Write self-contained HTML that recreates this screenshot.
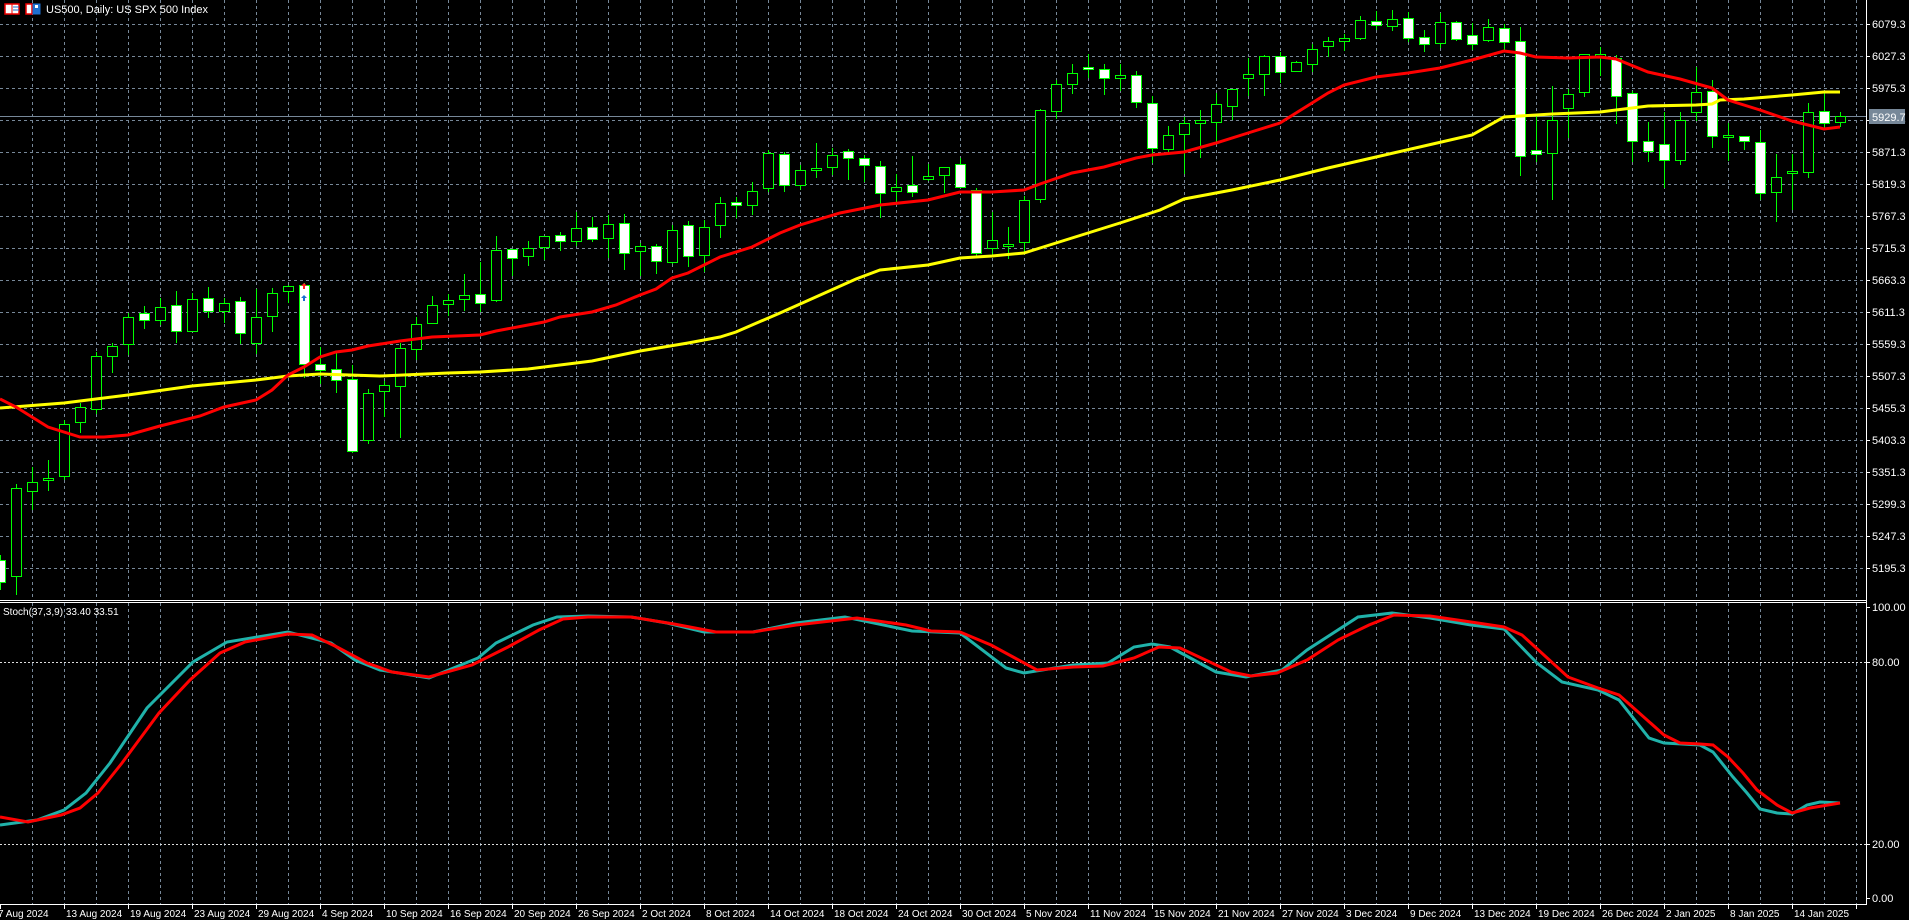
<!DOCTYPE html>
<html><head><meta charset="utf-8">
<style>
html,body{margin:0;padding:0;background:#000;width:1909px;height:920px;overflow:hidden}
svg{display:block}
text{font-family:"Liberation Sans",sans-serif;font-size:11px;fill:#fff}
#dates text{font-size:10px}
</style></head>
<body>
<svg id="c" width="1909" height="920" viewBox="0 0 1909 920" xmlns="http://www.w3.org/2000/svg">
<rect width="1909" height="920" fill="#000"/>
<g id="grid"></g>
<line x1="0" y1="116.5" x2="1866" y2="116.5" stroke="#778899" stroke-width="1"/>
<g id="candles"></g>
<polyline fill="none" stroke="#ffff00" stroke-width="3" points="0,408 64,403 128,395 192,386 256,380 288,376 320,374 380,376 448,373 480,372 528,369 560,365 592,361 640,351 688,343 720,337 736,332 752,325 780,313 856,279 880,270 928,265 960,258 992,256 1024,253 1056,243 1088,233 1120,223 1160,210 1184,199 1232,190 1280,180 1328,168 1376,157 1424,146 1472,135 1504,117 1552,114 1600,112 1648,106 1696,105 1712,104 1720,100 1744,99 1792,95 1824,92 1840,92"/>
<polyline fill="none" stroke="#ff0000" stroke-width="3" points="0,399 16,407 48,427 80,437 104,437 128,435 160,426 200,416 224,407 256,400 272,390 288,375 304,367 320,357 336,352 352,350 368,346 400,341 432,337 480,335 496,331 528,325 544,322 560,317 592,312 616,305 640,295 656,289 672,278 688,273 720,257 752,247 780,233 800,225 840,213 880,205 928,200 960,192 992,192 1024,190 1040,184 1072,173 1104,167 1136,158 1152,155 1184,152 1216,143 1248,133 1280,123 1296,113 1328,93 1344,85 1376,77 1408,73 1440,68 1472,60 1504,51 1520,53 1536,57 1568,58 1600,57 1616,59 1648,72 1680,79 1712,88 1728,100 1760,110 1792,121 1824,129 1840,127"/>
<path d="M301,286 l3,-3 l3,3 h-2 v3 h-2 v-3z" fill="#ff2020"/>
<path d="M301,298 l3,-3 l3,3 h-2 v3 h-2 v-3z" fill="#1e6fd0"/>
<polyline fill="none" stroke="#20b2aa" stroke-width="3" points="0,825 37,820 64,810 86,793 110,763 147,708 193,662 227,642 288,632 331,643 355,660 380,670 429,678 478,658 496,643 533,625 557,617 588,616 631,617 667,623 704,632 753,632 796,623 845,617 912,631 960,633 1006,668 1024,673 1073,665 1108,663 1134,647 1152,644 1170,647 1216,672 1246,677 1282,670 1307,650 1358,617 1392,613 1430,618 1471,625 1504,629 1537,663 1562,682 1598,690 1619,700 1649,738 1664,743 1700,745 1713,752 1733,777 1747,793 1760,809 1777,813 1792,814 1807,805 1820,802 1840,803"/>
<polyline fill="none" stroke="#ff0000" stroke-width="3" points="0,817 28,822 61,815 80,808 98,793 122,763 159,713 190,680 220,653 245,642 288,634 312,635 337,647 367,663 392,672 429,677 472,665 508,647 539,630 563,619 588,617 631,617 674,624 716,632 753,632 796,625 857,618 906,625 931,631 960,632 991,645 1037,670 1073,667 1103,666 1134,658 1159,647 1180,648 1231,672 1251,676 1277,673 1307,660 1338,640 1369,625 1394,615 1430,616 1471,622 1504,627 1522,635 1568,677 1598,688 1619,695 1664,735 1680,743 1700,744 1713,745 1728,757 1743,773 1757,790 1777,805 1792,813 1810,808 1840,803"/>
<line x1="1866.5" y1="0" x2="1866.5" y2="905" stroke="#fff"/>
<line x1="0" y1="600.5" x2="1867" y2="600.5" stroke="#fff"/>
<line x1="0" y1="602.5" x2="1867" y2="602.5" stroke="#fff"/>
<line x1="0" y1="904.5" x2="1867" y2="904.5" stroke="#fff"/>
<g id="ticks"></g>
<g>
<text x="1872" y="28">6079.3</text><text x="1872" y="60">6027.3</text><text x="1872" y="92">5975.3</text>
<text x="1872" y="156">5871.3</text><text x="1872" y="188">5819.3</text><text x="1872" y="220">5767.3</text>
<text x="1872" y="252">5715.3</text><text x="1872" y="284">5663.3</text><text x="1872" y="316">5611.3</text>
<text x="1872" y="348">5559.3</text><text x="1872" y="380">5507.3</text><text x="1872" y="412">5455.3</text>
<text x="1872" y="444">5403.3</text><text x="1872" y="476">5351.3</text><text x="1872" y="508">5299.3</text>
<text x="1872" y="540">5247.3</text><text x="1872" y="572">5195.3</text>
<text x="1872" y="124" fill="#778899">5923.3</text>
<rect x="1869" y="109" width="36" height="15" fill="#778899"/>
<text x="1872" y="121" fill="#fff">5929.7</text>
<text x="1872" y="611">100.00</text><text x="1872" y="666">80.00</text><text x="1872" y="848">20.00</text><text x="1872" y="902">0.00</text>
</g>
<g id="dates">
<text x="-2" y="917">7 Aug 2024</text><text x="66" y="917">13 Aug 2024</text><text x="130" y="917">19 Aug 2024</text>
<text x="194" y="917">23 Aug 2024</text><text x="258" y="917">29 Aug 2024</text><text x="322" y="917">4 Sep 2024</text>
<text x="386" y="917">10 Sep 2024</text><text x="450" y="917">16 Sep 2024</text><text x="514" y="917">20 Sep 2024</text>
<text x="578" y="917">26 Sep 2024</text><text x="642" y="917">2 Oct 2024</text><text x="706" y="917">8 Oct 2024</text>
<text x="770" y="917">14 Oct 2024</text><text x="834" y="917">18 Oct 2024</text><text x="898" y="917">24 Oct 2024</text>
<text x="962" y="917">30 Oct 2024</text><text x="1026" y="917">5 Nov 2024</text><text x="1090" y="917">11 Nov 2024</text>
<text x="1154" y="917">15 Nov 2024</text><text x="1218" y="917">21 Nov 2024</text><text x="1282" y="917">27 Nov 2024</text>
<text x="1346" y="917">3 Dec 2024</text><text x="1410" y="917">9 Dec 2024</text><text x="1474" y="917">13 Dec 2024</text>
<text x="1538" y="917">19 Dec 2024</text><text x="1602" y="917">26 Dec 2024</text><text x="1666" y="917">2 Jan 2025</text>
<text x="1730" y="917">8 Jan 2025</text><text x="1794" y="917">14 Jan 2025</text>
</g>
<rect x="5" y="4" width="14" height="10" fill="#fff" stroke="#e00" stroke-width="1.5"/>
<line x1="12" y1="4" x2="12" y2="14" stroke="#e00"/>
<line x1="13" y1="7" x2="19" y2="7" stroke="#1e6fd0"/><line x1="13" y1="10" x2="19" y2="10" stroke="#1e6fd0"/>
<rect x="26" y="4" width="6" height="10" fill="#fff" stroke="#e00" stroke-width="1.5"/>
<rect x="33" y="4" width="7" height="10" fill="#1e6fd0" stroke="#1e6fd0"/>
<rect x="35" y="5" width="3" height="3" fill="#fff"/>
<text x="46" y="13">US500, Daily:  US SPX 500 Index</text>
<text x="3" y="615" style="font-size:10px">Stoch(37,3,9) 33.40 33.51</text>
</svg>
<script>
var NS="http://www.w3.org/2000/svg";
function el(p,n,a){var e=document.createElementNS(NS,n);for(var k in a)e.setAttribute(k,a[k]);p.appendChild(e);return e;}
var g=document.getElementById('grid'),t=document.getElementById('ticks');
for(var i=0;i<18;i++){var y=24+32*i+0.5;el(g,'line',{x1:0,y1:y,x2:1866,y2:y,stroke:'#778899','stroke-dasharray':'3,3'});el(t,'line',{x1:1866,y1:y,x2:1870,y2:y,stroke:'#fff'});}
for(var x=32;x<1866;x+=32){el(g,'line',{x1:x+0.5,y1:0,x2:x+0.5,y2:600,stroke:'#778899','stroke-dasharray':'3,3'});el(g,'line',{x1:x+0.5,y1:603,x2:x+0.5,y2:904,stroke:'#778899','stroke-dasharray':'3,3'});}
[662.5,844.5].forEach(function(y){el(g,'line',{x1:0,y1:y,x2:1866,y2:y,stroke:'#ddd','stroke-dasharray':'2,2'});el(t,'line',{x1:1866,y1:y,x2:1870,y2:y,stroke:'#fff'});});
[607.5,898.5].forEach(function(y){el(t,'line',{x1:1866,y1:y,x2:1870,y2:y,stroke:'#fff'});});
for(var x=0;x<1866;x+=64){el(t,'line',{x1:x+0.5,y1:904,x2:x+0.5,y2:909,stroke:'#fff'});}
var D=[[560,582,555,590,1],[488,576,484,595,0],[482,491,467,510,0],[478,480,460,491,0],[424,476,420,480,0],[407,422,403,433,0],[356,409,352,414,0],[346,356,343,373,0],[317,344,313,355,0],[313,320,306,329,1],
[307,320,298,325,0],[305,331,291,343,1],[299,331,293,331,0],[298,311,287,318,1],[303,311,298,323,0],[301,333,297,344,1],[317,343,289,354,0],[293,316,288,332,0],[286,291,285,303,0],[285,364,283,378,1],
[364,370,347,384,1],[369,380,353,393,1],[379,451,365,453,1],[393,440,389,444,0],[385,391,381,417,0],[348,386,343,438,0],[324,349,317,360,0],[305,323,296,323,0],[300,304,294,316,0],[295,299,274,311,0],
[294,303,262,312,1],[250,300,236,302,0],[249,258,249,276,1],[248,256,241,266,0],[236,247,236,260,0],[235,241,232,251,1],[228,241,212,246,0],[227,239,217,242,1],[224,238,215,258,0],[223,253,214,270,1],
[246,251,243,276,0],[246,261,244,274,1],[230,262,225,264,0],[225,256,221,267,1],[227,255,220,272,0],[203,225,197,238,0],[202,205,197,218,1],[191,205,182,215,0],[153,188,150,192,0],[154,185,152,192,1],
[170,185,165,190,0],[168,170,143,178,0],[155,167,148,175,0],[151,158,149,180,1],[158,165,155,182,1],[166,193,161,218,1],[187,191,174,202,0],[185,192,156,197,1],[176,179,164,181,0],[167,175,167,193,0],
[164,187,158,188,1],[190,253,188,257,1],[240,248,212,257,0],[244,246,227,259,0],[200,242,196,253,0],[110,199,109,203,0],[84,111,80,119,0],[73,84,64,94,0],[67,69,54,78,1],[69,78,64,95,1],
[75,78,64,91,0],[75,102,71,108,1],[103,148,96,163,1],[135,149,126,153,0],[123,134,117,174,0],[120,123,110,158,0],[104,122,93,143,0],[89,106,89,120,0],[74,78,58,96,0],[56,74,55,96,0],
[56,72,52,83,1],[62,71,61,72,0],[49,64,44,72,0],[41,46,37,57,0],[38,41,34,51,0],[20,38,16,40,0],[21,25,11,30,1],[19,26,10,31,0],[18,38,12,42,1],[37,44,30,52,1],
[22,43,13,48,0],[22,39,21,41,1],[35,44,23,50,1],[27,40,19,42,0],[28,42,24,50,1],[41,156,27,176,1],[150,154,114,162,1],[120,153,86,200,0],[94,108,89,138,0],[54,92,54,97,0],
[54,56,47,76,0],[58,96,55,124,1],[93,141,91,162,1],[141,151,122,162,1],[144,160,112,188,1],[120,160,112,165,0],[92,112,67,121,0],[91,136,80,148,1],[135,137,123,161,0],[136,141,136,150,1],
[142,193,130,200,1],[177,192,154,222,0],[171,173,154,210,0],[112,172,103,178,0],[111,123,93,128,1],[116,122,112,127,0]];
var c=document.getElementById('candles');
D.forEach(function(d,i){var x=i*16;
 el(c,'line',{x1:x+0.5,y1:d[2],x2:x+0.5,y2:d[3],stroke:'#00ff00'});
 var h=Math.max(d[1]-d[0],1);
 el(c,'rect',{x:x-4.5,y:d[0]+0.5,width:10,height:h,fill:d[4]?'#fff':'#000',stroke:'#00ff00'});
});
</script>
</body></html>
